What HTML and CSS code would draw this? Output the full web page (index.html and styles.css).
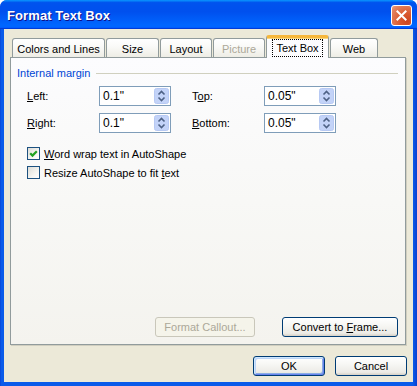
FILE: index.html
```html
<!DOCTYPE html>
<html>
<head>
<meta charset="utf-8">
<title>Format Text Box</title>
<link rel="stylesheet" href="styles.css">
</head>
<body>
<div class="window">
  <div class="titlebar">
    <span class="title">Format Text Box</span>
    <span class="close">
      <svg width="21" height="21" viewBox="0 0 21 21"><path d="M6 6 L15 15 M15 6 L6 15" stroke="#fff" stroke-width="2.2" stroke-linecap="square"/></svg>
    </span>
  </div>
  <div class="client">
    <div class="tabs">
      <div class="tab tab-colors">Colors and Lines</div>
      <div class="tab tab-size">Size</div>
      <div class="tab tab-layout">Layout</div>
      <div class="tab tab-picture disabled">Picture</div>
      <div class="tab tab-textbox selected"><span class="focus">Text Box</span></div>
      <div class="tab tab-web">Web</div>
    </div>
    <div class="panel">
      <div class="group-label"><span>Internal margin</span></div>
      <div class="fields">
        <span class="field-label"><u>L</u>eft:</span>
        <div class="spin"><span class="spin-value">0.1"</span><span class="spin-btn"><svg width="15" height="16" viewBox="0 0 15 16"><rect x="0.5" y="0.5" width="14" height="15" rx="2" fill="#C3D3F8" stroke="#B7C9F3"/><path d="M4.5 6.5 L7.5 3.5 L10.5 6.5" fill="none" stroke="#4D6185" stroke-width="1.6"/><path d="M4.5 9.5 L7.5 12.5 L10.5 9.5" fill="none" stroke="#4D6185" stroke-width="1.6"/></svg></span></div>
        <span class="field-label field-label-2">T<u>o</u>p:</span>
        <div class="spin"><span class="spin-value">0.05"</span><span class="spin-btn"><svg width="15" height="16" viewBox="0 0 15 16"><rect x="0.5" y="0.5" width="14" height="15" rx="2" fill="#C3D3F8" stroke="#B7C9F3"/><path d="M4.5 6.5 L7.5 3.5 L10.5 6.5" fill="none" stroke="#4D6185" stroke-width="1.6"/><path d="M4.5 9.5 L7.5 12.5 L10.5 9.5" fill="none" stroke="#4D6185" stroke-width="1.6"/></svg></span></div>
        <span class="field-label"><u>R</u>ight:</span>
        <div class="spin"><span class="spin-value">0.1"</span><span class="spin-btn"><svg width="15" height="16" viewBox="0 0 15 16"><rect x="0.5" y="0.5" width="14" height="15" rx="2" fill="#C3D3F8" stroke="#B7C9F3"/><path d="M4.5 6.5 L7.5 3.5 L10.5 6.5" fill="none" stroke="#4D6185" stroke-width="1.6"/><path d="M4.5 9.5 L7.5 12.5 L10.5 9.5" fill="none" stroke="#4D6185" stroke-width="1.6"/></svg></span></div>
        <span class="field-label field-label-2"><u>B</u>ottom:</span>
        <div class="spin"><span class="spin-value">0.05"</span><span class="spin-btn"><svg width="15" height="16" viewBox="0 0 15 16"><rect x="0.5" y="0.5" width="14" height="15" rx="2" fill="#C3D3F8" stroke="#B7C9F3"/><path d="M4.5 6.5 L7.5 3.5 L10.5 6.5" fill="none" stroke="#4D6185" stroke-width="1.6"/><path d="M4.5 9.5 L7.5 12.5 L10.5 9.5" fill="none" stroke="#4D6185" stroke-width="1.6"/></svg></span></div>
      </div>
      <div class="checks">
        <div class="check-row">
          <span class="checkbox"><svg width="11" height="11" viewBox="0 0 11 11"><path d="M2.2 5.2 L4.5 7.6 L8.8 3.2" fill="none" stroke="#21A121" stroke-width="2.2"/></svg></span>
          <span><u>W</u>ord wrap text in AutoShape</span>
        </div>
        <div class="check-row">
          <span class="checkbox"></span>
          <span>Resize AutoShape to fit <u>t</u>ext</span>
        </div>
      </div>
      <div class="panel-buttons">
        <span class="btn btn-disabled btn-callout"><span>Format Callout...</span></span>
        <span class="btn btn-frame"><span>Convert to <u>F</u>rame...</span></span>
      </div>
    </div>
    <div class="footer">
      <span class="btn btn-default btn-dlg">OK</span>
      <span class="btn btn-dlg">Cancel</span>
    </div>
  </div>
</div>
</body>
</html>
```

FILE: styles.css
```css
html, body {
  margin: 0;
  padding: 0;
  background: #ffffff;
}

body {
  width: 417px;
  height: 386px;
  overflow: hidden;
  font-family: "Liberation Sans", Arial, sans-serif;
  font-size: 11px;
  color: #000;
}

.window {
  width: 417px;
  height: 386px;
  box-sizing: border-box;
  display: flex;
  flex-direction: column;
  background: linear-gradient(90deg, #0A3FD0 0, #0A5BEA 1px, #0A5BEA 99%, #0A3FD0 100%);
  border-radius: 7px 7px 0 0;
  overflow: hidden;
}

.titlebar {
  height: 29px;
  flex: none;
  display: flex;
  align-items: center;
  justify-content: space-between;
  padding: 0 5px 0 7px;
  background: linear-gradient(180deg, #0997FF 0%, #0053EE 9%, #0050EE 40%, #0066FF 86%, #0066FF 92%, #005BFF 95%, #003DD7 97%, #003DD7 100%);
}

.title {
  color: #fff;
  font-weight: bold;
  font-size: 13px;
  letter-spacing: 0.1px;
  text-shadow: 1px 1px 0 #0F1089;
  padding-top: 1px;
}

.close {
  width: 19px;
  height: 19px;
  margin-top: 2px;
  border: 1px solid #fff;
  border-radius: 3px;
  background: radial-gradient(circle at 80% 80%, #CC4621 0, #D9582E 35%, #E2815E 80%, #EE9F80 100%);
  display: flex;
  align-items: center;
  justify-content: center;
}

.close svg {
  width: 19px;
  height: 19px;
}

.client {
  flex: 1;
  margin: 0 4px 4px 4px;
  background: #ECE9D8;
  padding: 6px 0 6px 6px;
  display: flex;
  flex-direction: column;
}

.tabs {
  height: 22px;
  display: flex;
  align-items: flex-end;
  gap: 1px;
  padding-left: 2px;
  position: relative;
  z-index: 2;
}

.tab {
  height: 19px;
  box-sizing: border-box;
  border: 1px solid #919B9C;
  border-bottom: none;
  border-radius: 3px 3px 0 0;
  background: linear-gradient(180deg, #FFFFFF 0%, #FAFAF8 40%, #EEEDE5 100%);
  display: flex;
  align-items: center;
  justify-content: center;
  padding-top: 1px;
}

.tab-colors { width: 93px; }
.tab-size { width: 53px; }
.tab-layout { width: 52px; }
.tab-picture { width: 52px; }
.tab-textbox { width: 63px; }
.tab-web { width: 48px; }

.tab.disabled {
  color: #ACA899;
}

.tab.selected {
  height: 23px;
  margin-bottom: -1px;
  background: #FCFCFE;
  border-top: 3px solid #F6B73C;
  box-shadow: inset 0 1px 0 #F9D77E;
  border-radius: 3px 3px 0 0;
  padding-top: 0;
}

.focus {
  outline: 1px dotted #000;
  outline-offset: 0;
  padding: 2px 3px 2px 3px;
  line-height: 12px;
}

.panel {
  width: 396px;
  height: 288px;
  box-sizing: border-box;
  border: 1px solid #919B9C;
  background: linear-gradient(180deg, #FCFCFE 0%, #F8F8F6 50%, #F4F3EE 100%);
  box-shadow: 1px 1px 0 #D0CEBF;
  padding: 8px 7px 7px 6px;
  display: flex;
  flex-direction: column;
  position: relative;
  z-index: 1;
}

.group-label {
  display: flex;
  align-items: center;
  height: 14px;
  color: #0046D5;
}

.group-label::after {
  content: "";
  flex: 1;
  border-top: 1px solid #D0D0BF;
  margin-left: 6px;
  margin-top: 1px;
}

.fields {
  margin-top: 6px;
  margin-left: 10px;
  display: grid;
  grid-template-columns: 72px 72px 93px 72px;
  row-gap: 7px;
  grid-auto-rows: 20px;
  align-items: center;
}

.field-label-2 {
  margin-left: 21px;
}

.spin {
  width: 72px;
  height: 20px;
  box-sizing: border-box;
  border: 1px solid #7F9DB9;
  background: #fff;
  display: flex;
  align-items: center;
  justify-content: space-between;
  padding: 0 1px 0 3px;
  font-size: 12px;
}

.spin-btn {
  display: flex;
  width: 15px;
  height: 16px;
}

.checks {
  margin-top: 14px;
  margin-left: 10px;
  display: flex;
  flex-direction: column;
  gap: 6px;
}

.check-row {
  display: flex;
  align-items: center;
  height: 13px;
  gap: 4px;
}

.checkbox {
  width: 13px;
  height: 13px;
  box-sizing: border-box;
  border: 1px solid #1C5180;
  background: linear-gradient(135deg, #DCDCD7 0%, #F5F5F1 60%, #FFFFFF 100%);
  display: flex;
  align-items: center;
  justify-content: center;
}

.panel-buttons {
  margin-top: auto;
  display: flex;
  justify-content: flex-end;
  gap: 27px;
}

.btn {
  height: 20px;
  box-sizing: border-box;
  border: 1px solid #003C74;
  border-radius: 3px;
  background: linear-gradient(180deg, #FFFFFF 0%, #F7F7F4 40%, #ECEBE6 85%, #D6D0C5 100%);
  display: flex;
  align-items: center;
  justify-content: center;
  font-size: 11px;
  white-space: pre;
}

.btn-callout { width: 100px; }
.btn-frame { width: 116px; }

.btn-disabled {
  border-color: #C9C7BA;
  background: #F5F4EA;
  color: #ACA899;
}

.footer {
  margin-top: 11px;
  display: flex;
  justify-content: flex-end;
  gap: 10px;
  padding-right: 6px;
}

.btn-dlg {
  width: 72px;
}

.btn-default {
  box-shadow: inset 1px 1px 0 #CEE7FF, inset -1px -1px 0 #6982EE, inset 2px 2px 0 #BCD4F6, inset -2px -2px 0 #89ADE4;
}
```
